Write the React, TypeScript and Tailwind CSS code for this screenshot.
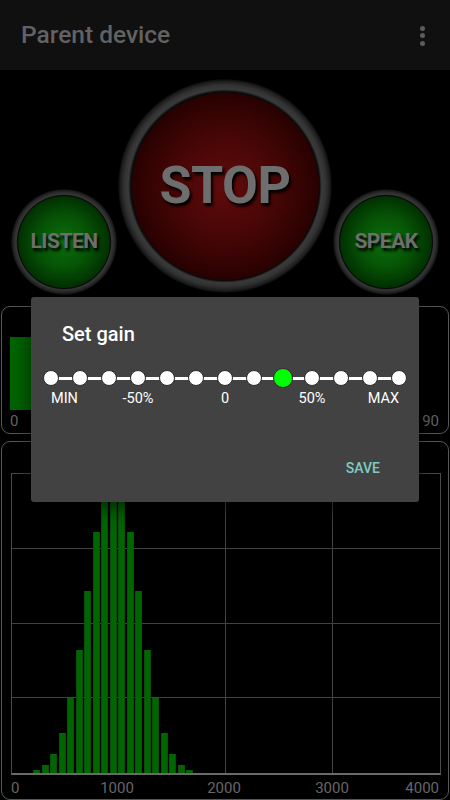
import React from 'react';

const bars = [3, 8, 19, 40, 75, 123, 182, 241, 285, 299, 285, 241, 182, 123, 75, 40, 19, 8, 3];
const steps = Array.from({ length: 13 }, (_, i) => i);
const ticks = [
  { label: '0', left: 0, align: 'left' },
  { label: '1000', left: 106, align: 'center' },
  { label: '2000', left: 213, align: 'center' },
  { label: '3000', left: 321, align: 'center' },
  { label: '4000', left: 428, align: 'right' },
];

function RoundButton({ size, inner, ring, fill, text, label }: { size: string; inner: string; ring: string; fill: string; text: string; label: string }) {
  return (
    <div className={`${size} ${ring} rounded-full flex items-center justify-center shrink-0`}>
      <div className={`${inner} ${fill} rounded-full flex items-center justify-center border border-[#0a0a0a]`}>
        <span className={`${text} font-bold text-[#6e6e6e] [text-shadow:2px_3px_3px_#000]`}>{label}</span>
      </div>
    </div>
  );
}

export default function App() {
  return (
    <div className="w-[450px] h-[800px] bg-black relative overflow-hidden font-['Roboto',sans-serif]">
      {/* Barre du haut */}
      <div className="h-[70px] bg-[#101010] flex items-center justify-between pl-[21px] pr-[25px]">
        <h1 className="text-[24.5px] font-medium text-[#626262] leading-none mt-[1px]">Parent device</h1>
        <div className="flex flex-col gap-[2.5px] mt-[1px]">
          <span className="w-[5px] h-[5px] rounded-full bg-[#5c5c5c]"></span>
          <span className="w-[5px] h-[5px] rounded-full bg-[#5c5c5c]"></span>
          <span className="w-[5px] h-[5px] rounded-full bg-[#5c5c5c]"></span>
        </div>
      </div>

      {/* Boutons */}
      <div className="h-[236px] flex items-end justify-between px-[11px] pb-[11px]">
        <RoundButton
          size="w-[106px] h-[106px]"
          inner="w-[94px] h-[94px]"
          ring="bg-[radial-gradient(circle_closest-side,#0a0a0a_87%,#363636_90%,#2c2c2c_94%,#181818_98%,#050505_100%)]"
          fill="bg-[radial-gradient(circle_closest-side,#0b700b_0%,#065406_55%,#013001_100%)]"
          text="text-[21px] tracking-[-0.5px]"
          label="LISTEN"
        />
        <div className="mb-[2px]">
          <RoundButton
            size="w-[214px] h-[214px]"
            inner="w-[189px] h-[189px]"
            ring="bg-[radial-gradient(circle_closest-side,#0a0a0a_88%,#3a3a3a_90.5%,#333_94%,#1c1c1c_98%,#050505_100%)]"
            fill="bg-[radial-gradient(circle_closest-side,#600b0b_0%,#470606_55%,#280101_100%)]"
            text="text-[52px] tracking-[-0.5px]"
            label="STOP"
          />
        </div>
        <RoundButton
          size="w-[106px] h-[106px]"
          inner="w-[94px] h-[94px]"
          ring="bg-[radial-gradient(circle_closest-side,#0a0a0a_87%,#363636_90%,#2c2c2c_94%,#181818_98%,#050505_100%)]"
          fill="bg-[radial-gradient(circle_closest-side,#0b700b_0%,#065406_55%,#013001_100%)]"
          text="text-[21px] tracking-[-0.5px]"
          label="SPEAK"
        />
      </div>

      {/* Niveau */}
      <div className="mx-px h-[128px] border border-[#575757] rounded-[9px] flex flex-col">
        <div className="mt-[30px] ml-[8px] w-[120px] h-[73px] bg-[#006400]"></div>
        <div className="mt-[2px] flex justify-between pl-[8px] pr-[9px] text-[15px] leading-[18px] text-[#666666]">
          <span>0</span>
          <span>90</span>
        </div>
      </div>

      {/* Histogramme */}
      <div className="mx-px mt-[7px] h-[359px] border border-[#575757] rounded-[9px] pt-[31px] pl-[9px]">
        <div className="relative w-[430px] h-[302px] border-l border-t border-r border-[#4a4a4a] border-b-2 border-b-[#6a6a6a]">
          <div className="grid grid-cols-4 grid-rows-4 w-full h-full">
            {Array.from({ length: 16 }, (_, i) => (
              <div key={i} className={`border-[#424242] ${i % 4 !== 3 ? 'border-r' : ''} ${i < 12 ? 'border-b' : ''}`}></div>
            ))}
          </div>
          <div className="absolute left-[21px] bottom-0 flex items-end gap-[1.53px]">
            {bars.map((h, i) => (
              <div key={i} className="w-[7px] bg-[#006600] border-x border-[#0a4f0a]" style={{ height: h }}></div>
            ))}
          </div>
        </div>
        <div className="relative h-[18px] mt-[4px] w-[430px] text-[15px] leading-[18px] text-[#666666]">
          {ticks.map((t) => (
            <span
              key={t.label}
              className={`absolute top-0 ${t.align === 'center' ? '-translate-x-1/2' : t.align === 'right' ? '-translate-x-full' : ''}`}
              style={{ left: t.left }}
            >
              {t.label}
            </span>
          ))}
        </div>
      </div>

      {/* Dialogue */}
      <div className="absolute left-[31px] top-[297px] w-[388px] h-[205px] bg-[#424242] rounded-[3px] shadow-[0_6px_20px_rgba(0,0,0,0.6)] flex flex-col">
        <h2 className="pt-[25px] pl-[31px] text-[20px] leading-[24px] font-medium text-white">Set gain</h2>
        <div className="relative mt-[22px] ml-[12.5px] w-[363px] h-[20px] flex items-center justify-between">
          <div className="absolute left-[1px] right-[1px] top-[8.5px] h-[3px] bg-white"></div>
          {steps.map((s) => (
            <div key={s} className="relative w-[15px] h-[20px] flex items-center justify-center">
              {s === 8 ? (
                <span className="w-[20px] h-[20px] shrink-0 rounded-full bg-[#00ff00] border border-[#3d1f3d]"></span>
              ) : (
                <span className="w-[16px] h-[16px] shrink-0 rounded-full bg-white border border-[#2a2a2a]"></span>
              )}
            </div>
          ))}
        </div>
        <div className="relative mt-[3px] ml-[20px] h-[16px] text-[14.5px] leading-[16px] text-white">
          <span className="absolute left-0">MIN</span>
          <span className="absolute left-[87px] -translate-x-1/2">-50%</span>
          <span className="absolute left-[174px] -translate-x-1/2">0</span>
          <span className="absolute left-[261px] -translate-x-1/2">50%</span>
          <span className="absolute left-[348px] -translate-x-full">MAX</span>
        </div>
        <div className="mt-[53px] flex justify-end pr-[39px]">
          <span className="text-[14px] leading-[16px] font-medium text-[#80cbc4]">SAVE</span>
        </div>
      </div>
    </div>
  );
}
